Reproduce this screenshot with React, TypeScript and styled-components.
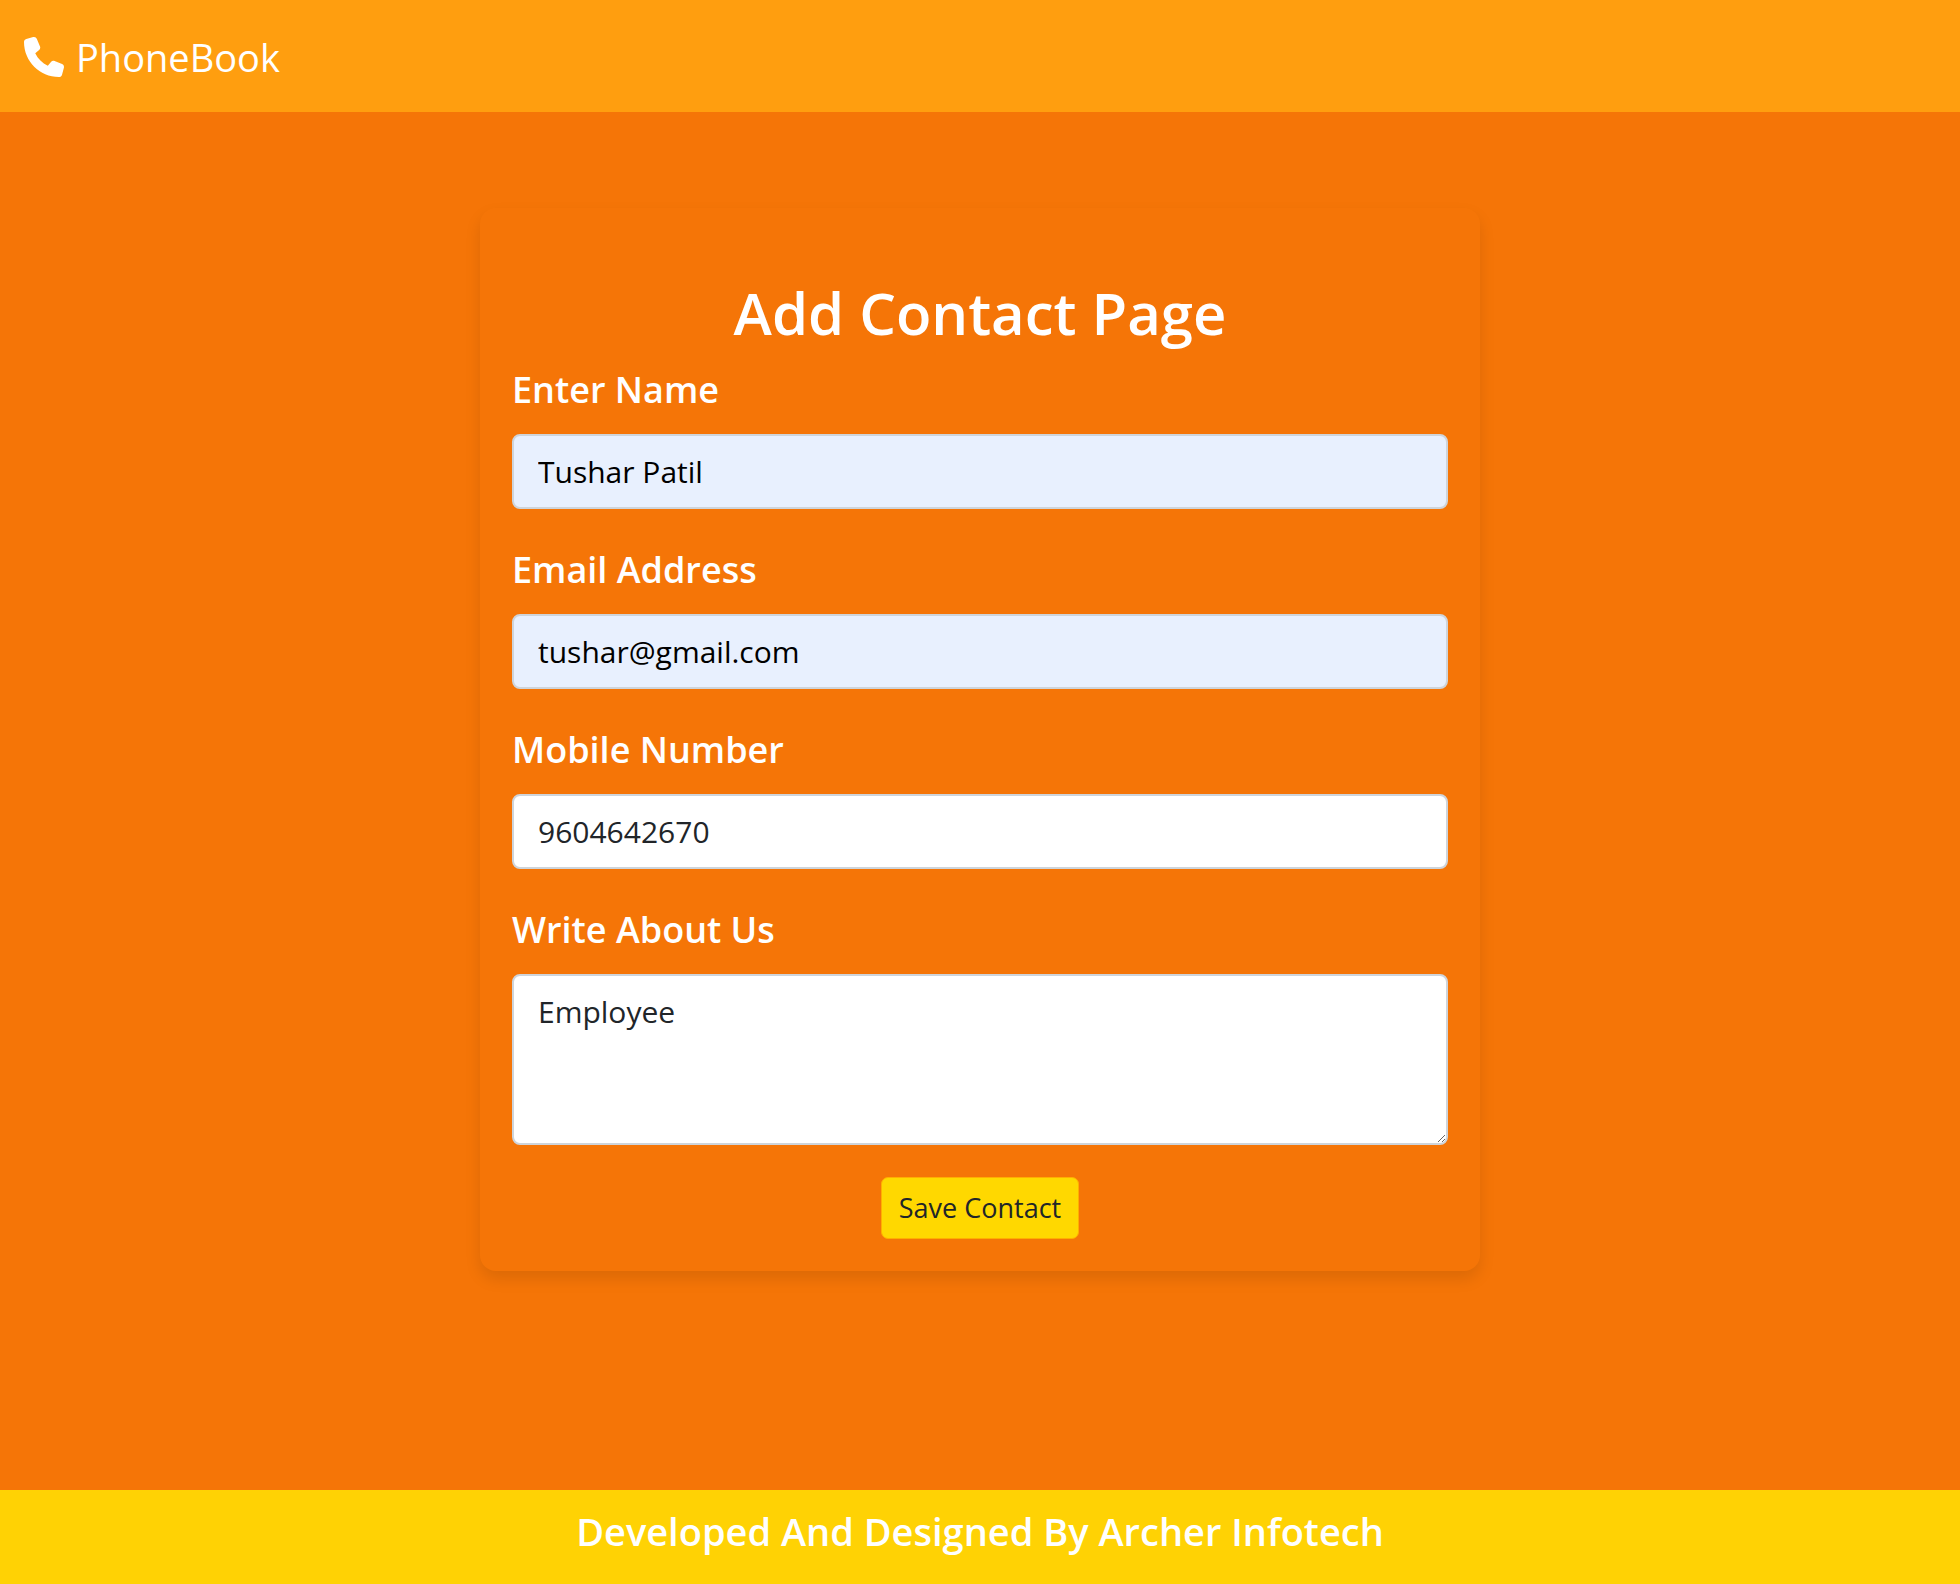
import React from "react";
import styled, { createGlobalStyle, css } from "styled-components";
import { FaPhone } from "react-icons/fa6";

const GlobalStyle = createGlobalStyle`
  *, *::before, *::after { box-sizing: border-box; }
  body {
    margin: 0;
    background: #f57507;
    color: #212529;
    font-family: "Segoe UI", "Open Sans", "Noto Sans", sans-serif;
    font-size: 32px;
    line-height: 48px;
  }
`;

const Page = styled.div`
  display: flex;
  flex-direction: column;
  min-height: 100vh;
`;

const Navbar = styled.header`
  display: flex;
  align-items: center;
  padding: 27px 24px 25px;
  background: #ff9e0f;
`;

const Brand = styled.a`
  display: inline-flex;
  align-items: center;
  gap: 12px;
  color: #fff;
  font-size: 38px;
  line-height: 60px;
  text-decoration: none;

  svg {
    width: 40px;
    height: 40px;
  }
`;

const Main = styled.main`
  flex: 1;
  padding: 96px 24px;
`;

const Card = styled.form`
  display: flex;
  flex-direction: column;
  gap: 32px;
  max-width: 1000px;
  margin: 0 auto;
  padding: 64px 32px 32px;
  border-radius: 16px;
  box-shadow: 0 8px 16px rgba(0, 0, 0, 0.1);
`;

const Title = styled.h1`
  margin: 0 0 -24px;
  color: #fff;
  font-size: 58px;
  font-weight: 600;
  line-height: 81px;
  text-align: center;
`;

const Field = styled.div`
  display: flex;
  flex-direction: column;
  gap: 16px;
`;

const Label = styled.label`
  color: #fff;
  font-size: 36px;
  font-weight: 600;
  line-height: 57px;
`;

const control = css`
  display: block;
  width: 100%;
  padding: 12px 24px;
  border: 2px solid #ced4da;
  border-radius: 8px;
  background: #fff;
  color: #212529;
  font-family: inherit;
  font-size: 30px;
  line-height: 48px;
  outline: none;
`;

const Input = styled.input<{ $autofilled?: boolean }>`
  ${control}
  height: 75px;
  ${({ $autofilled }) =>
    $autofilled &&
    css`
      background: #e8f0fe;
      color: #000;
    `}
`;

const TextArea = styled.textarea`
  ${control}
  height: 171px;
  resize: vertical;
`;

const SaveButton = styled.button`
  align-self: center;
  padding: 9px 17px;
  border: 1px solid #ffae00;
  border-radius: 7px;
  background: #ffd800;
  color: #212529;
  font-family: inherit;
  font-size: 27px;
  line-height: 42px;
  cursor: pointer;
`;

const Footer = styled.footer`
  padding: 17px 24px 29px;
  background: #ffd204;
  color: #fff;
  font-size: 38px;
  font-weight: 600;
  line-height: 48px;
  text-align: center;
`;

const fields = [
  { id: "name", label: "Enter Name", type: "text", value: "Tushar Patil", autofilled: true },
  { id: "email", label: "Email Address", type: "email", value: "tushar@gmail.com", autofilled: true },
  { id: "mobile", label: "Mobile Number", type: "tel", value: "9604642670", autofilled: false },
];

export default function App() {
  return (
    <>
      <GlobalStyle />
      <Page>
        <Navbar>
          <Brand href="#">
            <FaPhone aria-hidden="true" />
            PhoneBook
          </Brand>
        </Navbar>
        <Main>
          <Card onSubmit={(event) => event.preventDefault()}>
            <Title>Add Contact Page</Title>
            {fields.map((field) => (
              <Field key={field.id}>
                <Label htmlFor={field.id}>{field.label}</Label>
                <Input
                  id={field.id}
                  name={field.id}
                  type={field.type}
                  defaultValue={field.value}
                  $autofilled={field.autofilled}
                />
              </Field>
            ))}
            <Field>
              <Label htmlFor="about">Write About Us</Label>
              <TextArea id="about" name="about" defaultValue="Employee" />
            </Field>
            <SaveButton type="submit">Save Contact</SaveButton>
          </Card>
        </Main>
        <Footer>Developed And Designed By Archer Infotech</Footer>
      </Page>
    </>
  );
}
